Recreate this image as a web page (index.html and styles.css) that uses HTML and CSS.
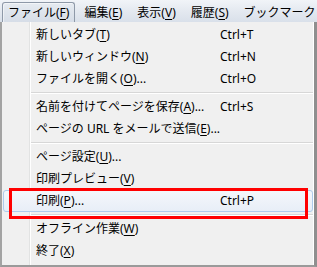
FILE: index.html
```html
<!DOCTYPE html>
<html lang="ja">
<head>
<meta charset="utf-8">
<link rel="stylesheet" href="styles.css">
</head>
<body>
<div class="screen">
  <div class="menubar">
    <div class="mb-item pressed">ファイル(<u>F</u>)</div>
    <div class="mb-item">編集(<u>E</u>)</div>
    <div class="mb-item">表示(<u>V</u>)</div>
    <div class="mb-item">履歴(<u>S</u>)</div>
    <div class="mb-item">ブックマーク</div>
  </div>
  <div class="popup">
    <div class="item"><span class="label">新しいタブ(<u>T</u>)</span><span class="key">Ctrl+T</span></div>
    <div class="item"><span class="label">新しいウィンドウ(<u>N</u>)</span><span class="key">Ctrl+N</span></div>
    <div class="item"><span class="label">ファイルを開く(<u>O</u>)...</span><span class="key">Ctrl+O</span></div>
    <div class="sep"></div>
    <div class="item"><span class="label">名前を付けてページを保存(<u>A</u>)...</span><span class="key">Ctrl+S</span></div>
    <div class="item"><span class="label">ページの URL をメールで送信(<u>E</u>)...</span><span class="key"></span></div>
    <div class="sep"></div>
    <div class="item"><span class="label">ページ設定(<u>U</u>)...</span><span class="key"></span></div>
    <div class="item"><span class="label">印刷プレビュー(<u>V</u>)</span><span class="key"></span></div>
    <div class="item hover"><span class="label">印刷(<u>P</u>)...</span><span class="key">Ctrl+P</span></div>
    <div class="sep"></div>
    <div class="item"><span class="label">オフライン作業(<u>W</u>)</span><span class="key"></span></div>
    <div class="item"><span class="label">終了(<u>X</u>)</span><span class="key"></span></div>
    <div class="callout"></div>
  </div>
</div>
</body>
</html>
```

FILE: styles.css
```css
html, body {
  margin: 0;
  padding: 0;
  background: #f0f0f0;
}

.screen {
  width: 317px;
  height: 267px;
  overflow: hidden;
  font-family: "Noto Sans", "Noto Sans CJK JP", sans-serif;
  font-size: 12px;
  color: #000;
}

u {
  text-decoration: underline;
  text-underline-offset: 2px;
  text-decoration-thickness: 1px;
}

.menubar {
  height: 22px;
  box-sizing: border-box;
  display: flex;
  align-items: stretch;
  padding: 2px 0 0 2px;
  gap: 3px;
  background: linear-gradient(to bottom, #f1f4f8 0%, #e4e9f0 50%, #d9e0ea 100%);
  white-space: nowrap;
  overflow: hidden;
}

.mb-item {
  display: flex;
  align-items: center;
  padding: 0 5px;
  border: 1px solid transparent;
  border-bottom: none;
  border-radius: 3px 3px 0 0;
  line-height: 18px;
}

.mb-item.pressed {
  border-color: #8e99a8;
  background: linear-gradient(to bottom, #e6ebf1, #d6dde7);
  box-shadow: inset 1px 1px 0 rgba(255,255,255,0.5);
}

.popup {
  position: relative;
  height: 245px;
  box-sizing: border-box;
  border-left: 2px solid #a3a3a3;
  border-right: 3px solid #8f8f8f;
  border-bottom: 2px solid #9a9a9a;
  padding-top: 2px;
  background:
    linear-gradient(to right, transparent 27px, #e2e3e3 27px, #e2e3e3 28px, #ffffff 28px, #ffffff 29px, transparent 29px),
    #f0f0f0;
  box-shadow: inset -1px 0 0 #ffffff;
  display: flex;
  flex-direction: column;
}

.item {
  height: 22px;
  box-sizing: border-box;
  margin: 0 1px;
  border: 1px solid transparent;
  border-radius: 3px;
  display: grid;
  grid-template-columns: 184px auto;
  align-items: center;
  padding-left: 32px;
  line-height: 18px;
  white-space: nowrap;
}

.item.hover {
  border-color: #aecbec;
  background: linear-gradient(to bottom, #f4f7fb, #e8eef7);
}

.sep {
  height: 6px;
  box-sizing: border-box;
  margin-left: 29px;
  margin-right: 1px;
  padding-top: 2px;
}

.sep::before {
  content: "";
  display: block;
  height: 1px;
  background: #d7d7d7;
  border-bottom: 1px solid #ffffff;
}

.callout {
  position: absolute;
  left: 7px;
  top: 166px;
  width: 293px;
  height: 25px;
  border: 3px solid #ff0000;
}
```
